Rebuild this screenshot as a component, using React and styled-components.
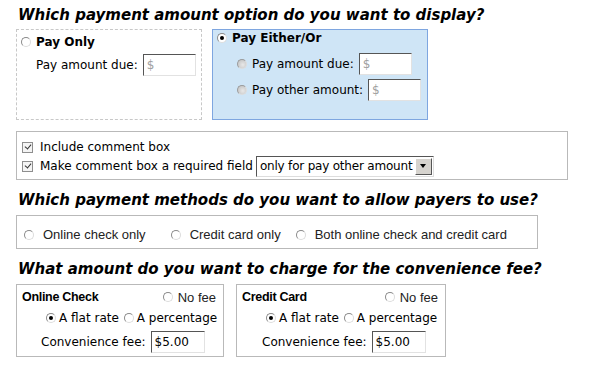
import React from 'react'
import styled, { createGlobalStyle } from 'styled-components'

const Global = createGlobalStyle`
  body {
    margin: 0;
    background: #ffffff;
    font-family: "DejaVu Sans", Verdana, sans-serif;
    font-size: 12px;
    color: #000;
  }
`

const Page = styled.div`
  width: 594px;
  height: 380px;
  padding: 3px 0 0 16px;
  box-sizing: border-box;
`

const Heading = styled.h2`
  margin: ${p => p.$top || 0}px 0 ${p => p.$bottom || 2}px 2px;
  font-family: "DejaVu Sans", Verdana, sans-serif;
  font-size: 15px;
  font-weight: bold;
  font-style: italic;
  line-height: 24px;
  white-space: nowrap;
`

const Row = styled.div`
  display: flex;
  gap: ${p => p.$gap || 10}px;
`

const OptionBox = styled.div`
  width: ${p => p.$w}px;
  height: 91px;
  box-sizing: border-box;
  padding: ${p => (p.$active ? '0 4px' : '2px 4px')};
  border: 1px ${p => (p.$active ? 'solid #7ea6e0' : 'dashed #c8c8c8')};
  background: ${p => (p.$active ? '#cfe5f6' : '#fff')};
`

const Line = styled.div`
  display: flex;
  align-items: center;
  height: ${p => p.$h || 20}px;
  margin-top: ${p => p.$mt || 0}px;
  padding-left: ${p => p.$indent || 0}px;
  gap: ${p => p.$gap || 5}px;
  white-space: nowrap;
`

const Bold = styled.span`
  font-weight: bold;
`

const Gap = styled.span`
  margin-right: ${p => p.$r}px;
`

const Radio = styled.span`
  display: inline-block;
  width: 10px;
  height: 10px;
  flex: none;
  box-sizing: border-box;
  border-radius: 50%;
  border: 1px solid ${p => (p.$disabled ? '#9a9a9a' : '#8a8a8a')};
  border-right-color: #dcdcdc;
  border-bottom-color: #dcdcdc;
  background: ${p =>
    p.$disabled ? 'radial-gradient(circle at 60% 60%, #e8e8e8, #bdbdbd)' : '#fff'};
  position: relative;
  &::after {
    content: '';
    display: ${p => (p.$checked ? 'block' : 'none')};
    position: absolute;
    left: 2px;
    top: 2px;
    width: 4px;
    height: 4px;
    border-radius: 50%;
    background: #000;
  }
`

const Check = styled.span`
  display: inline-block;
  width: 11px;
  height: 11px;
  flex: none;
  box-sizing: border-box;
  border: 1px solid #8e8e8e;
  background: #f4f4f4;
  position: relative;
  &::after {
    content: '';
    position: absolute;
    left: 2.5px;
    top: 0.5px;
    width: 3px;
    height: 5px;
    border: solid #333;
    border-width: 0 1.5px 1.5px 0;
    transform: rotate(40deg);
  }
`

const Field = styled.span`
  display: inline-flex;
  align-items: center;
  width: ${p => p.$w || 53}px;
  height: 22px;
  box-sizing: border-box;
  padding-left: 3px;
  background: #fff;
  border-top: 1px solid #555;
  border-left: 1px solid #555;
  border-right: 1px solid #e2e2e2;
  border-bottom: 1px solid #e2e2e2;
  color: ${p => (p.$placeholder ? '#a0a0a0' : '#000')};
`

const Panel = styled.div`
  width: ${p => p.$w}px;
  height: ${p => p.$h}px;
  margin-top: ${p => p.$mt || 0}px;
  box-sizing: border-box;
  border: 1px solid #b9b9b9;
  padding: ${p => p.$pad || '5px 5px'};
`

const Select = styled.span`
  display: inline-flex;
  align-items: stretch;
  width: 178px;
  height: 21px;
  box-sizing: border-box;
  border-top: 1px solid #555;
  border-left: 1px solid #555;
  border-right: 1px solid #ddd;
  border-bottom: 1px solid #ddd;
  background: #fff;
  margin-left: -4px;
`

const SelectText = styled.span`
  flex: 1;
  display: flex;
  align-items: center;
  padding-left: 3px;
  font-size: 12px;
  letter-spacing: -0.2px;
  white-space: nowrap;
  overflow: hidden;
`

const SelectArrow = styled.span`
  width: 15px;
  flex: none;
  margin: 1px;
  background: #d6d3ce;
  border: 1px solid;
  border-color: #fff #555 #555 #fff;
  display: flex;
  align-items: center;
  justify-content: center;
  &::after {
    content: '';
    border-left: 3.5px solid transparent;
    border-right: 3.5px solid transparent;
    border-top: 4px solid #000;
  }
`

const ArialLine = styled.div`
  display: flex;
  align-items: center;
  height: 100%;
  box-sizing: border-box;
  padding: 5px 0 0 7px;
  font-family: "Liberation Sans", Arial, sans-serif;
  font-size: 13px;
  color: #222;
  white-space: nowrap;
`

const MethodOption = styled.span`
  display: inline-flex;
  align-items: center;
  gap: 9px;
  margin-right: ${p => p.$mr}px;
`

const FeeHead = styled.div`
  display: flex;
  align-items: center;
  justify-content: space-between;
  height: 20px;
  padding-right: 2px;
`

const FeeTitle = styled.span`
  font-family: "Liberation Sans", Tahoma, sans-serif;
  font-weight: bold;
  font-size: 12.5px;
  letter-spacing: -0.3px;
`

const NoFee = styled.span`
  display: inline-flex;
  align-items: center;
  gap: 5px;
  font-family: "Liberation Sans", Arial, sans-serif;
  font-size: 13px;
  color: #222;
`

const FeeBox = ({ title, w, rateIndent, feeIndent }) => (
  <Panel $w={w} $h={73} $pad="2px 5px 0 5px">
    <FeeHead>
      <FeeTitle>{title}</FeeTitle>
      <NoFee>
        <Radio />
        No fee
      </NoFee>
    </FeeHead>
    <Line $h={22} $indent={rateIndent} $gap={3}>
      <Radio $checked />
      <Gap $r={2}>A flat rate</Gap>
      <Radio />
      <span>A percentage</span>
    </Line>
    <Line $h={25} $indent={feeIndent}>
      <span>Convenience fee:</span>
      <Field $w={54}>$5.00</Field>
    </Line>
  </Panel>
)

export default function App() {
  return (
    <Page>
      <Global />
      <Heading>Which payment amount option do you want to display?</Heading>

      <Row>
        <OptionBox $w={186}>
          <Line>
            <Radio />
            <Bold>Pay Only</Bold>
          </Line>
          <Line $h={25} $indent={15}>
            <span>Pay amount due:</span>
            <Field $placeholder>$</Field>
          </Line>
        </OptionBox>

        <OptionBox $w={216} $active>
          <Line $h={16}>
            <Radio $checked />
            <Bold>Pay Either/Or</Bold>
          </Line>
          <Line $h={26} $mt={5} $indent={20}>
            <Radio $disabled />
            <span>Pay amount due:</span>
            <Field $placeholder>$</Field>
          </Line>
          <Line $h={26} $indent={20}>
            <Radio $disabled />
            <span>Pay other amount:</span>
            <Field $placeholder>$</Field>
          </Line>
        </OptionBox>
      </Row>

      <Panel $w={552} $h={49} $pad="6px 5px 0" $mt={11}>
        <Line $h={18} $gap={7}>
          <Check />
          <span>Include comment box</span>
        </Line>
        <Line $h={20} $gap={7}>
          <Check />
          <span>Make comment box a required field</span>
          <Select>
            <SelectText>only for pay other amount</SelectText>
            <SelectArrow />
          </Select>
        </Line>
      </Panel>

      <Heading $top={8} $bottom={3}>
        Which payment methods do you want to allow payers to use?
      </Heading>
      <Panel $w={522} $h={34} $pad="0">
        <ArialLine>
          <MethodOption $mr={25}>
            <Radio />
            Online check only
          </MethodOption>
          <MethodOption $mr={15}>
            <Radio />
            Credit card only
          </MethodOption>
          <MethodOption $mr={0}>
            <Radio />
            Both online check and credit card
          </MethodOption>
        </ArialLine>
      </Panel>

      <Heading $top={8} $bottom={3}>
        What amount do you want to charge for the convenience fee?
      </Heading>
      <Row $gap={12}>
        <FeeBox title="Online Check" w={208} rateIndent={24} feeIndent={19} />
        <FeeBox title="Credit Card" w={210} rateIndent={24} feeIndent={20} />
      </Row>
    </Page>
  )
}
